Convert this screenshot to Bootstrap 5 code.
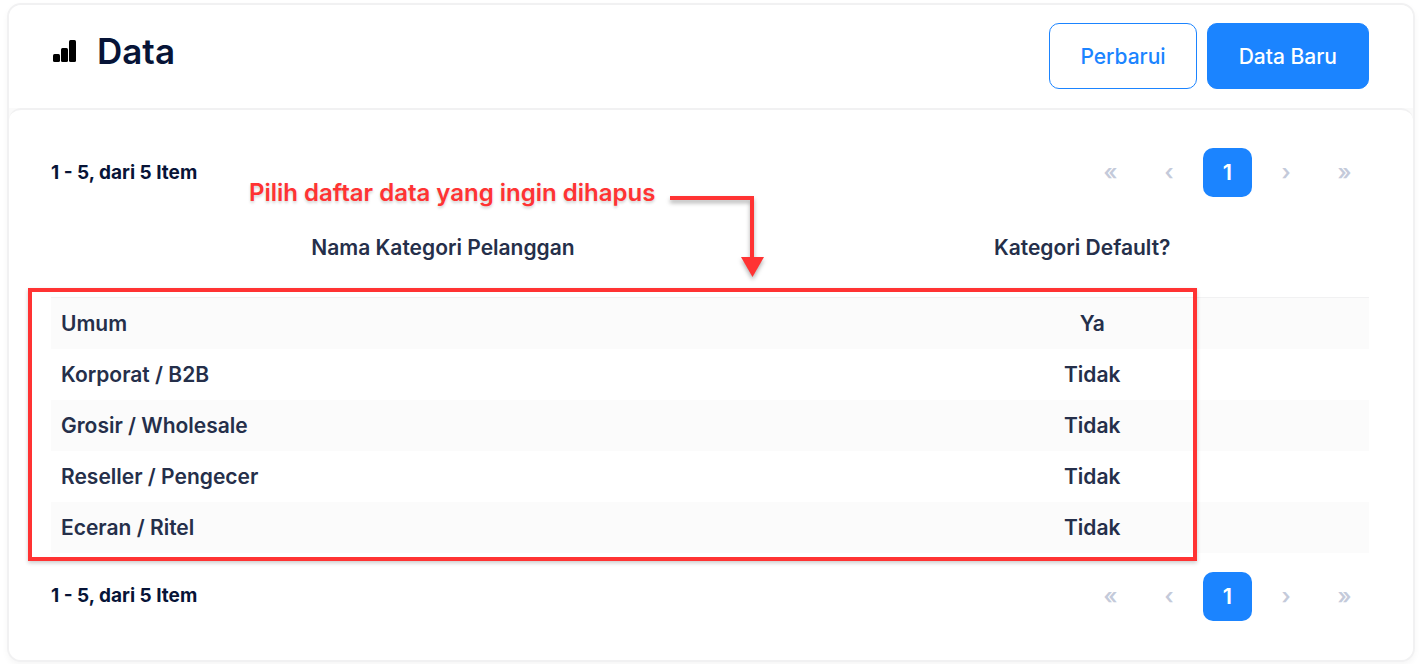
<!DOCTYPE html>
<html lang="id">
<head>
<meta charset="utf-8">
<meta name="viewport" content="width=device-width, initial-scale=1">
<title>Data Kategori Pelanggan</title>
<link rel="stylesheet" href="https://cdn.jsdelivr.net/npm/bootstrap@5.3.0/dist/css/bootstrap.min.css">
<style>
  :root { --brand: #1b84ff; --ink: #071437; --ink-soft: #252f4a; --edge: #f1f1f2; --note: #ff3333; }
  body { font-family: Inter, "Liberation Sans", sans-serif; color: var(--ink); background: #fff; font-size: 21px; line-height: 33px; }
  .page { padding: 3px 7px 2px; }
  .panel { border: 2px solid var(--edge); border-radius: 14px; background: #fafafa; box-shadow: 0 3px 6px rgba(0, 0, 0, .04); }
  .panel-head { background: #fff; border-radius: 12px 12px 0 0; padding: 18px 44px 19px 42px; }
  .panel-main { background: #fff; border-top: 2px solid var(--edge); border-radius: 12px; padding: 38px 44px 39px 42px; }
  .panel-title { font-size: 35px; line-height: 44px; font-weight: 600; padding-top: 6px; gap: 20px; }
  .panel-title svg { width: 26px; height: 26px; }
  .panel-actions { gap: 10px; }
  .btn-panel { --bs-btn-font-size: 21px; --bs-btn-font-weight: 500; --bs-btn-line-height: 34px; --bs-btn-padding-x: 30px; --bs-btn-border-radius: 10px; padding-top: 16px; padding-bottom: 14px; }
  .btn-solid { --bs-btn-color: #fff; --bs-btn-bg: var(--brand); --bs-btn-border-color: var(--brand); --bs-btn-hover-color: #fff; --bs-btn-hover-bg: #056ee9; --bs-btn-padding-x: 31px; }
  .btn-line { --bs-btn-color: var(--brand); --bs-btn-bg: #fff; --bs-btn-border-color: var(--brand); --bs-btn-hover-color: #fff; --bs-btn-hover-bg: var(--brand); }
  .item-count { font-size: 19px; line-height: 30px; font-weight: 700; }
  .pager { width: 283px; }
  .pager .page-link { width: 49px; height: 49px; padding: 0; border: 0; border-radius: 10px; background: transparent; color: #c4cada; font-size: 22px; line-height: 49px; text-align: center; font-weight: 600; }
  .pager .active .page-link { background: var(--brand); color: #fff; }
  .data-table { table-layout: fixed; --bs-table-color: var(--ink-soft); --bs-table-striped-color: var(--ink-soft); --bs-table-striped-bg: #fbfbfb; --bs-table-bg: #fff; }
  .data-table th, .data-table td { border: 0; font-weight: 600; padding: 9px 10px; color: var(--ink-soft); }
  .data-table thead th { height: 100px; padding: 2px 30px 0 10px; vertical-align: middle; border-bottom: 1px solid var(--edge); }
  .col-name { width: 61%; }
  .col-default { width: 36%; }
  .note-text { left: 198px; top: -21px; color: var(--note); font-size: 24px; line-height: 34px; font-weight: 600; white-space: nowrap; text-shadow: 0 2px 3px rgba(0, 0, 0, .18); }
  .note-arrow { left: 619px; top: -3px; width: 100px; height: 90px; filter: drop-shadow(0 3px 2px rgba(0, 0, 0, .3)); pointer-events: none; }
  .note-frame { left: -23px; right: 172px; top: 91px; bottom: -8px; border: 4px solid var(--note); box-shadow: 0 2px 4px rgba(0, 0, 0, .2); pointer-events: none; }
  .table-area { margin-bottom: 19px; }
</style>
</head>
<body>
<main class="page">
  <section class="panel">
    <header class="panel-head d-flex justify-content-between align-items-start">
      <h1 class="panel-title d-flex align-items-center mb-0">
        <svg viewBox="0 0 26 26" aria-hidden="true"><rect x="2" y="16" width="7" height="8" rx="1.500"/><rect x="10" y="10" width="7" height="14" rx="1.500"/><rect x="18" y="2" width="7" height="22" rx="1.500"/></svg>
        Data
      </h1>
      <div class="panel-actions d-flex">
        <button type="button" class="btn btn-panel btn-line">Perbarui</button>
        <button type="button" class="btn btn-panel btn-solid">Data Baru</button>
      </div>
    </header>
    <div class="panel-main">
      <div class="d-flex justify-content-between align-items-center">
        <div class="item-count">1 - 5, dari 5 Item</div>
        <nav aria-label="Halaman atas">
          <ul class="pagination pager justify-content-between mb-0">
            <li class="page-item"><a class="page-link" href="#">«</a></li>
            <li class="page-item"><a class="page-link" href="#">‹</a></li>
            <li class="page-item active"><a class="page-link" href="#">1</a></li>
            <li class="page-item"><a class="page-link" href="#">›</a></li>
            <li class="page-item"><a class="page-link" href="#">»</a></li>
          </ul>
        </nav>
      </div>
      <div class="table-area position-relative">
        <table class="table table-striped data-table mb-0">
          <thead>
            <tr class="text-center"><th class="col-name" scope="col">Nama Kategori Pelanggan</th><th class="col-default" scope="col">Kategori Default?</th><th></th></tr>
          </thead>
          <tbody>
            <tr><td>Umum</td><td class="text-center">Ya</td><td></td></tr>
            <tr><td>Korporat / B2B</td><td class="text-center">Tidak</td><td></td></tr>
            <tr><td>Grosir / Wholesale</td><td class="text-center">Tidak</td><td></td></tr>
            <tr><td>Reseller / Pengecer</td><td class="text-center">Tidak</td><td></td></tr>
            <tr><td>Eceran / Ritel</td><td class="text-center">Tidak</td><td></td></tr>
          </tbody>
        </table>
        <div class="note-text position-absolute">Pilih daftar data yang ingin dihapus</div>
        <svg class="note-arrow position-absolute" viewBox="0 0 100 90" aria-hidden="true"><path d="M0 4H82V66" fill="none" stroke="#ff3333" stroke-width="4"/><path d="M71 63H94L82.500 83Z" fill="#ff3333"/></svg>
        <div class="note-frame position-absolute"></div>
      </div>
      <div class="d-flex justify-content-between align-items-center">
        <div class="item-count">1 - 5, dari 5 Item</div>
        <nav aria-label="Halaman bawah">
          <ul class="pagination pager justify-content-between mb-0">
            <li class="page-item"><a class="page-link" href="#">«</a></li>
            <li class="page-item"><a class="page-link" href="#">‹</a></li>
            <li class="page-item active"><a class="page-link" href="#">1</a></li>
            <li class="page-item"><a class="page-link" href="#">›</a></li>
            <li class="page-item"><a class="page-link" href="#">»</a></li>
          </ul>
        </nav>
      </div>
    </div>
  </section>
</main>
<script src="https://cdn.jsdelivr.net/npm/bootstrap@5.3.0/dist/js/bootstrap.bundle.min.js"></script>
</body>
</html>
